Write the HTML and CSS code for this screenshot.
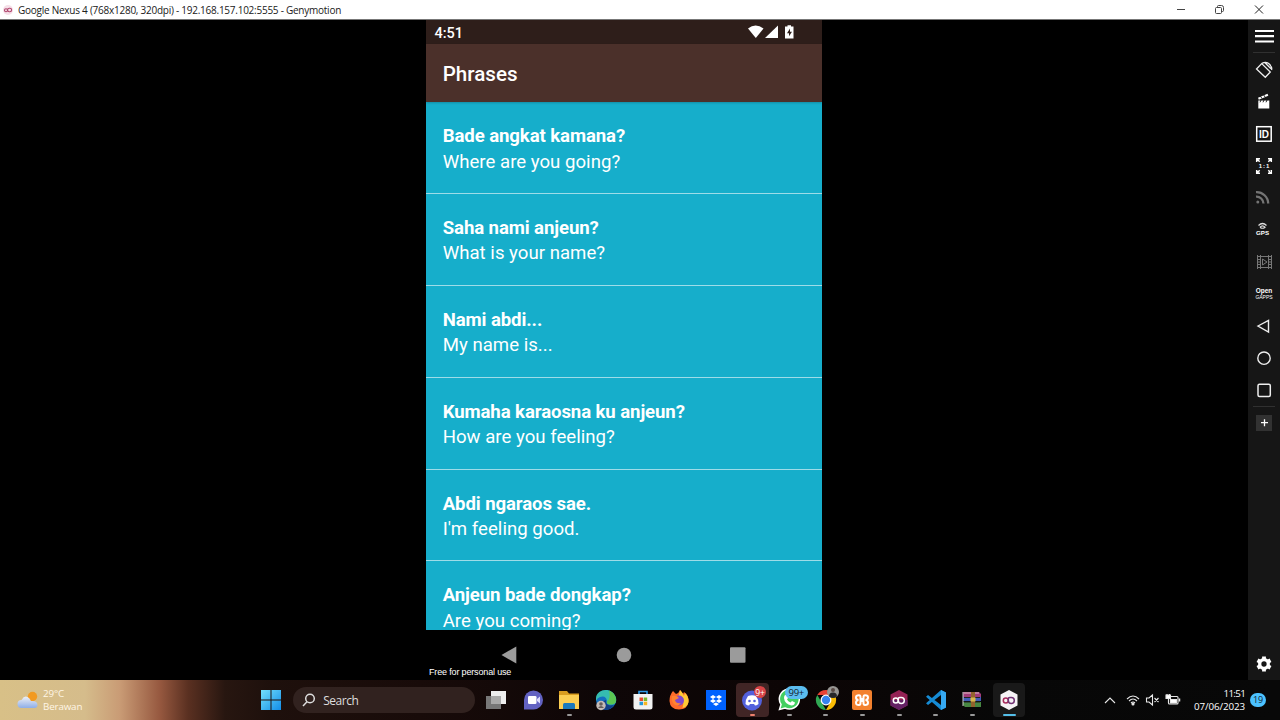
FILE: index.html
```html
<!DOCTYPE html>
<html lang="en">
<head>
<meta charset="utf-8">
<title>Genymotion</title>
<link rel="stylesheet" href="styles.css">
</head>
<body>
<header class="titlebar">
  <svg class="title-logo" width="10" height="10" viewBox="0 0 10 10"><circle cx="5" cy="5" r="5" fill="#f5dfe8"/><g fill="none" stroke="#b0476e" stroke-width="1.1"><circle cx="3" cy="5.2" r="1.5"/><rect x="4.6" y="3.2" width="4" height="3.5" rx="1.7"/></g></svg>
  <span class="title-text">Google Nexus 4 (768x1280, 320dpi) - 192.168.157.102:5555 - Genymotion</span>
  <svg class="window-buttons" width="100" height="19" viewBox="0 0 100 19" fill="none" stroke="#444" stroke-width="1"><path d="M7 9.5h8"/><rect x="45.500" y="7.500" width="6" height="6" rx="1"/><path d="M47.500 7V6.500q0-1 1-1h3q2 0 2 2v3q0 1-1 1h-.5"/><path d="M85 5.500l8 8M93 5.500l-8 8" stroke="#222"/></svg>
</header>

<main class="emulator">
  <section class="stage">
    <div class="phone">
      <div class="statusbar">
        <span>4:51</span>
        <svg width="48" height="16" viewBox="0 0 48 16" fill="#fff"><path d="M0 4.500Q7.500-1.500 15.500 4.500L7.800 14z"/><path d="M30 1.500V14H17z"/><path d="M39.500 1.200h3.500v1.300h2.500v12h-8.500v-12h2.500z"/><path d="M42 4.500l-3 4.700h2v3l3-4.500h-2z" fill="#2e1e1a"/></svg>
      </div>
      <h1 class="appbar">Phrases</h1>
      <ul class="phrases">
        <li class="phrase"><b>Bade angkat kamana?</b><span>Where are you going?</span></li>
        <li class="phrase"><b>Saha nami anjeun?</b><span>What is your name?</span></li>
        <li class="phrase"><b>Nami abdi...</b><span>My name is...</span></li>
        <li class="phrase"><b>Kumaha karaosna ku anjeun?</b><span>How are you feeling?</span></li>
        <li class="phrase"><b>Abdi ngaraos sae.</b><span>I'm feeling good.</span></li>
        <li class="phrase"><b>Anjeun bade dongkap?</b><span>Are you coming?</span></li>
      </ul>
      <div class="navbar">
        <svg width="396" height="34" viewBox="0 0 396 34" fill="#9b9b9b"><path d="M75.500 25L90.300 16.500v17z"/><circle cx="198" cy="25" r="7.300"/><rect x="304" y="17.300" width="15.500" height="15.500" rx="1"/></svg>
        <span class="license">Free for personal use</span>
      </div>
    </div>
  </section>

  <aside class="tools">
    <div class="tool"><svg viewBox="0 0 32 32"><path d="M7 11h19M7 16.200h19M7 21.500h19" stroke="#fff" stroke-width="2.200"/></svg></div>
    <div class="rule"></div>
    <div class="tool"><svg viewBox="0 0 32 32" fill="none" stroke="#eee" stroke-width="1.300"><path d="M8.500 15L13.700 9.600 22.300 18 17.300 23.300z"/><path d="M14 9.300Q18.500 7 21.500 10.300T23.500 16M17 8.700l6 6"/></svg></div>
    <div class="tool"><svg viewBox="0 0 32 32" fill="#fff"><path d="M10.300 14.500h11V22.500h-11z"/><path d="M10 11.700l9.500-4 .8 2-9.500 4z"/><path d="M12.300 10l1.700 2.500M15.500 8.700l1.700 2.500M13 14l-1 2.300M16 14l-1 2.300M19 14l-1 2.300" stroke="#161616" stroke-width=".9"/></svg></div>
    <div class="tool"><svg viewBox="0 0 32 32"><rect x="8.700" y="8.700" width="14.500" height="14.500" fill="none" stroke="#fff" stroke-width="1.500"/><text x="16" y="19.700" class="id-text">ID</text></svg></div>
    <div class="tool"><svg viewBox="0 0 32 32" fill="none" stroke="#fff" stroke-width="1.500"><path d="M8.700 12V8.700H12M8.700 8.700l3 3M20 8.700h3.300V12M23.300 8.700l-3 3M8.700 20v3.300H12M8.700 23.300l3-3M20 23.300h3.300V20M23.300 23.300l-3-3"/><text x="16.500" y="18" class="ratio-text">1:1</text></svg></div>
    <div class="tool"><svg viewBox="0 0 32 32" fill="none" stroke="#747474" stroke-width="2.300"><circle cx="9.800" cy="20" r="1.500" fill="#747474" stroke="none"/><path d="M8 10.200A11.500 11.500 0 0 1 20.200 21.500M8 14.700A7 7 0 0 1 15.500 21.500"/></svg></div>
    <div class="tool"><svg viewBox="0 0 32 32" fill="none" stroke="#ddd" stroke-width="1.200"><path d="M10.500 11.500Q14.500 7.500 18.500 11.500M12 13.200Q14.500 10.500 17 13.200Q14.500 15.300 12 13.200"/><text x="14.600" y="21.200" class="gps-text">GPS</text></svg></div>
    <div class="tool"><svg viewBox="0 0 32 32" fill="none" stroke="#777" stroke-width="1"><path d="M9.500 9v14M12.500 9v14M20.500 9v14M23.500 9v14M9.500 10.500h14M9.500 21.500h14M9.500 13.500h3M9.500 16h3M9.500 18.500h3M20.500 13.500h3M20.500 16h3M20.500 18.500h3"/><path d="M14.500 13v6l4.500-3z"/></svg></div>
    <div class="tool"><svg viewBox="0 0 32 32"><text x="16" y="15" class="open-text">Open</text><text x="16" y="20.500" class="gapps-text">GAPPS</text></svg></div>
    <div class="tool"><svg viewBox="0 0 32 32" fill="none" stroke="#eee" stroke-width="1.400"><path d="M10 16L20.500 10.500v11.500z"/></svg></div>
    <div class="tool"><svg viewBox="0 0 32 32" fill="none" stroke="#eee" stroke-width="1.400"><circle cx="16" cy="16.200" r="6.200"/></svg></div>
    <div class="tool"><svg viewBox="0 0 32 32" fill="none" stroke="#eee" stroke-width="1.500"><rect x="10" y="10.300" width="12.300" height="12.300" rx="1.500"/></svg></div>
    <div class="rule"></div>
    <div class="tool"><svg viewBox="0 0 32 32"><rect x="8" y="7" width="16" height="16" fill="#323232"/><path d="M13 14.700h7M16.500 11.200v7" stroke="#fff" stroke-width="1.300"/></svg></div>
    <div class="tool settings"><svg viewBox="0 0 32 32"><circle cx="16" cy="16" r="4.300" fill="none" stroke="#fff" stroke-width="3.300"/><g stroke="#fff" stroke-width="3.800"><path d="M16 8.500v3M16 20.500v3M9.500 12.250l2.600 1.500M19.900 18.250l2.600 1.500M9.500 19.750l2.600-1.500M19.900 13.750l2.600-1.500"/></g></svg></div>
  </aside>
</main>

<footer class="taskbar">
  <div class="weather">
    <svg width="22" height="20" viewBox="0 0 22 20"><defs><linearGradient id="cloud" x2="0" y2="1"><stop stop-color="#eef0f6"/><stop offset="1" stop-color="#8eaee8"/></linearGradient></defs><circle cx="15.500" cy="6.500" r="4.700" fill="#f29a20"/><path d="M4.500 18a4 4 0 0 1 0-8Q8 4 12.500 8.500q1 1 1.300 2.500Q20.500 10.500 20.500 15q0 3-3 3z" fill="url(#cloud)"/></svg>
    <div><span>29°C</span><span>Berawan</span></div>
  </div>
  <svg class="start" width="20" height="20" viewBox="0 0 20 20"><defs><linearGradient id="win" x2="1" y2="1"><stop stop-color="#74e0fb"/><stop offset="1" stop-color="#128de8"/></linearGradient></defs><path d="M0 0h9.500v9.500H0zM10.500 0H20v9.500h-9.500zM0 10.500h9.500V20H0zM10.500 10.500H20V20h-9.500z" fill="url(#win)"/></svg>
  <div class="search"><svg width="14" height="14" viewBox="0 0 14 14" fill="none" stroke="#ddd" stroke-width="1.500"><circle cx="8" cy="5.500" r="4.300"/><path d="M5 8.700L1 13"/></svg><span>Search</span></div>

  <nav class="apps">
    <div class="app"><svg viewBox="0 0 24 24"><path d="M7 3h15v13H7z" fill="#eee"/><path d="M2 8h15v13H2z" fill="#777"/><path d="M7 8h10v8H7z" fill="#aaa"/></svg></div>
    <div class="app"><svg viewBox="0 0 24 24"><path d="M3 21.500V12a9.500 9.500 0 1 1 9.500 9.500z" fill="#6262c2"/><rect x="7" y="8" width="8.500" height="8" rx="1.300" fill="#fff"/><path d="M16 11l3-2.500v7L16 13z" fill="#dcdcff"/></svg></div>
    <div class="app open"><svg viewBox="0 0 24 24"><path d="M2 3h8l2 2.500h10V21H2z" fill="#d99d20"/><path d="M2 7h20v14H2z" fill="#fbce53"/><path d="M6 16.500q0-1.500 1.500-1.500h9q1.500 0 1.500 1.500V21H6z" fill="#1979bd"/></svg></div>
    <div class="app"><svg viewBox="0 0 24 24"><circle cx="12" cy="12" r="10" fill="#136fc1"/><path d="M2 10C3 0 19-1 22 10q1.500 7-6 6.500-4 0-3-3.500Q12 7 6 9q-3 1-4 4z" fill="#35bcb0"/><path d="M15 2.500q7 3 7 9.500 0 5-6 4.500-4 0-3-3.500 4-2 2-10.500z" fill="#5bc752"/><path d="M12 12q-1 7 8 5-6 8-13 3 0-7 5-8z" fill="#123f86"/><circle cx="7" cy="17.500" r="4.700" fill="#c4bab6"/><circle cx="7" cy="16" r="1.800" fill="#665e5b"/><path d="M4 20q3-4 6 0z" fill="#665e5b"/></svg></div>
    <div class="app"><svg viewBox="0 0 24 24"><path d="M8 7V3.500h8V7" fill="none" stroke="#2d9ae8" stroke-width="1.600"/><path d="M2.500 6h19v13q0 2.500-2.500 2.500H5q-2.500 0-2.500-2.500z" fill="#f2f2f2"/><path d="M8.500 9.500H12V13H8.500z" fill="#e64a2e"/><path d="M12.700 9.500h3.500V13h-3.500z" fill="#74b72b"/><path d="M8.500 13.700H12v3.500H8.500z" fill="#2598d8"/><path d="M12.700 13.700h3.500v3.500h-3.500z" fill="#f7b621"/></svg></div>
    <div class="app"><svg viewBox="0 0 24 24"><path d="M6 3l3 3q3-1 4-4 2 2 3 4l1-2q5 3 4.500 10-1 7.500-9.500 7.500Q3 21.500 2.500 13 2.500 7 6 3z" fill="#ff6b2b"/><path d="M13 2q3 3 4 6l1-3q4 4 3.500 9-1 5-6 6 3-8-4-11 1-4 1.500-7z" fill="#ffca35"/><circle cx="12" cy="12.500" r="5" fill="#8048cb"/><path d="M5 8q5-1 7 2l-4 2q1 4 6 3-4 5-8 0-2-3-1-7z" fill="#ff8330"/></svg></div>
    <div class="app"><svg viewBox="0 0 24 24"><path d="M2 2h20v20H2z" fill="#0062ff"/><path d="M9 7l3 2-3 2-3-2zM15 7l3 2-3 2-3-2zM9 11l3 2-3 2-3-2zM15 11l3 2-3 2-3-2zM12 14.500l3 1.500-3 2-3-2z" fill="#fff"/></svg></div>
    <div class="app open alert"><svg viewBox="0 0 24 24"><circle cx="12" cy="12.500" r="10" fill="#5260dc"/><path d="M8 8q4-1.500 8 0 3 4 2.500 8-2 1.500-3.500 1.500l-1-1.500h-4l-1 1.500q-2 0-3.500-1.500Q5 12 8 8z" fill="#fff"/><circle cx="9.500" cy="13" r="1.300" fill="#5260dc"/><circle cx="14.500" cy="13" r="1.300" fill="#5260dc"/></svg><span class="badge red">9+</span></div>
    <div class="app open"><svg viewBox="0 0 24 24"><path d="M2.500 21.500l1.500-5A10 10 0 1 1 8 20z" fill="#43cf60" stroke="#fff" stroke-width="1.500"/><path d="M8 7l2 0 1 3-1 1.500q1 2 3.500 3l1.500-1.500 3 1.500q-.5 3-3.500 3Q7.500 16 7 10q0-2 1-3z" fill="#fff"/></svg><span class="badge blue">99+</span></div>
    <div class="app open"><svg viewBox="0 0 24 24"><path d="M3.300 7A10 10 0 0 1 20.700 7H12z" fill="#e94235"/><path d="M3.300 7L8 15l4 7A10 10 0 0 1 3.300 7z" fill="#30a853"/><path d="M20.700 7A10 10 0 0 1 12 22l4-7 0-8z" fill="#fbbc04"/><circle cx="12" cy="12" r="4.800" fill="#3683ef" stroke="#fff" stroke-width="1.300"/></svg><svg class="avatar" viewBox="0 0 12 12"><circle cx="6" cy="6" r="6" fill="#989693"/><path d="M2 10.500q0-4 4-4t4 4q-4 3-8 0z" fill="#272729"/><circle cx="6" cy="4" r="2" fill="#594944"/></svg></div>
    <div class="app open"><svg viewBox="0 0 24 24"><rect x="2" y="2" width="20" height="20" rx="2" fill="#f3812e"/><path d="M9 7.200Q6 7.200 6 9.500T8.500 12Q6 12.300 6 14.700T9 17Q10.500 17 10.500 15V13h3v2q0 2 1.500 2 3 0 3-2.300T15.500 12Q18 11.800 18 9.500T15 7.200q-1.500 0-1.500 2V11h-3V9.200q0-2-1.500-2z" fill="none" stroke="#fff" stroke-width="2"/></svg></div>
    <div class="app open"><svg viewBox="0 0 24 24"><path d="M12 2l8.500 4.500v11L12 22l-8.500-4.500v-11z" fill="#952254"/><path d="M3.500 12h17v5.500L12 22l-8.500-4.500z" fill="#642064"/><g fill="none" stroke="#fff" stroke-width="1.500"><circle cx="8.800" cy="12.500" r="2.500"/><path d="M11.300 12.500V11q0-1.500 1.500-1.500h1.500q3 0 3 3t-3 3q-3 0-3-3z"/></g></svg></div>
    <div class="app open"><svg viewBox="0 0 24 24"><path d="M17 2l5 2.500v15L17 22 2 8.700 4 7l13 10V7L4 17l-2-1.700z" fill="#168bd4"/><path d="M17 2l5 2.500v15L17 22z" fill="#36a9f2"/></svg></div>
    <div class="app open"><svg viewBox="0 0 24 24"><path d="M3 4h16l2 2v3H3z" fill="#a13b79"/><path d="M3 9h18v4H3z" fill="#405cb7"/><path d="M3 14h18v5H5l-2-2z" fill="#478641"/><path d="M4 5h15" stroke="#ddc5c5"/><path d="M4 9.500h16M4 14h16" stroke="#222"/><path d="M11 4h4v15h-4z" fill="#93632e"/><path d="M10.500 9.500h5v4h-5z" fill="#d9b74d"/><path d="M3 4v14" stroke="#ccc"/></svg></div>
    <div class="app open active"><svg viewBox="0 0 24 24"><path d="M12 2l8.500 4.500v11L12 22l-8.500-4.500v-11z" fill="#f5f3f5"/><g fill="none" stroke-width="1.500"><circle cx="8.800" cy="12.500" r="2.500" stroke="#a92c5c"/><path d="M11.300 12.500V11q0-1.500 1.500-1.500h1.500q3 0 3 3t-3 3q-3 0-3-3z" stroke="#713374"/></g></svg></div>
  </nav>

  <svg class="tray" width="80" height="16" viewBox="0 0 80 16" fill="none" stroke="#e8e8e8" stroke-width="1.100"><path d="M1 11l5-5 5 5"/><path d="M23 7Q29 1 35 7M25 9Q29 5 33 9M27 11Q29 9 31 11"/><circle cx="29" cy="12" r="1" fill="#fff"/><path d="M42.500 6H45l3.500-3v10L45 10h-2.500zM50.500 6l4 4M54.500 6l-4 4"/><rect x="64.500" y="4.500" width="9.500" height="7.500" rx="1"/><path d="M66.500 7.500h6V11h-6z" fill="#fff"/><path d="M75.500 6.500v3" stroke-width="1.500"/><path d="M62 3h4.500v3.500H62zM63 2v1M65.500 2v1M64.500 7v4" fill="#fff"/></svg>
  <div class="clock"><span>11:51</span><span>07/06/2023</span></div>
  <span class="notice">19</span>
</footer>
</body>
</html>
```

FILE: styles.css
```css
* { box-sizing: border-box; }
body {
  margin: 0;
  width: 1280px;
  height: 720px;
  overflow: hidden;
  display: flex;
  flex-direction: column;
  background: #000;
  font-family: "Open Sans", "Noto Sans", sans-serif;
}
svg { display: block; flex: none; }

.titlebar {
  height: 20px;
  flex: none;
  display: flex;
  align-items: center;
  padding: 0 11px 0 3px;
  background: #fff;
  border-bottom: 1px solid #777;
  color: #202020;
}
.title-text { margin-left: 5px; font-size: 10px; white-space: nowrap; letter-spacing: -0.25px; }
.window-buttons { margin-left: auto; margin-right: -1px; }

.emulator { height: 660px; flex: none; display: flex; }
.stage { flex: 1; padding-left: 426px; }
.phone {
  width: 396px;
  height: 660px;
  display: flex;
  flex-direction: column;
  color: #fff;
  font-family: Roboto, sans-serif;
}
.statusbar {
  height: 24px;
  flex: none;
  display: flex;
  justify-content: space-between;
  align-items: center;
  padding: 0 26px 0 8.500px;
  background: #2e1e1a;
  font-size: 14.5px;
  font-weight: 500;
}
.statusbar span { padding-top: 2px; }
.appbar {
  height: 58px;
  flex: none;
  margin: 0;
  padding: 2px 16.700px 0;
  background: #4b302a;
  font-size: 20.6px;
  font-weight: 500;
  line-height: 57px;
  position: relative;
  box-shadow: 0 1px 2px #0003;
}
.phrases {
  list-style: none;
  margin: 0;
  padding: 0;
  height: 528.400px;
  flex: none;
  overflow: hidden;
  background: #16aecb;
}
.phrase {
  height: 91.900px;
  padding: 22px 16.700px 0;
  border-bottom: 1px solid #9edce8;
  display: flex;
  flex-direction: column;
  font-size: 18.600px;
  line-height: 25.500px;
}
.phrase b { font-weight: 700; letter-spacing: -0.1px; }
.phrase span { letter-spacing: 0.02px; }
.navbar { flex: 1; display: flex; flex-direction: column; }
.license {
  margin: 2px 0 0 3px;
  font: 9px/12px "Liberation Sans", sans-serif;
  letter-spacing: -0.16px;
}

.tools {
  width: 32px;
  background: #161616;
  display: flex;
  flex-direction: column;
}
.tool { height: 32px; }
.tool svg { width: 32px; height: 32px; }
.rule { height: 2px; flex: none; margin: 0 5px; border-top: 1px solid #303030; }
.settings { margin-top: auto; }
.tools text { fill: #fff; stroke: none; text-anchor: middle; font-family: "Liberation Sans", sans-serif; }
.id-text { font-size: 10px; font-weight: bold; }
.ratio-text { font-size: 6px; font-weight: bold; letter-spacing: 1px; }
.gps-text { font-size: 6.200px; font-weight: bold; }
.open-text { font-size: 6.500px; font-weight: bold; }
.gapps-text { font-size: 5px; }

.taskbar {
  height: 40px;
  flex: none;
  display: flex;
  align-items: center;
  background: linear-gradient(90deg, #d8c087 0, #d5bc8b 85px, #c99b75 120px, #96583f 160px, #5a3021 188px, #271610 225px, #1e100c 270px, #180b09 420px, #0e0607 600px, #0c0505 790px, #070707 1000px, #080808 100%);
  color: #fff;
}
.weather {
  width: 261px;
  height: 40px;
  display: flex;
  align-items: center;
  padding-left: 17px;
  gap: 4px;
  font-size: 9.800px;
  line-height: 13.500px;
  letter-spacing: -0.15px;
  color: #fff6e6;
}
.weather span { display: block; }
.start { margin: 0 12px 0 1px; }
.search {
  width: 182px;
  height: 26px;
  margin-right: 2px;
  border-radius: 13px;
  background: #31221f;
  display: flex;
  align-items: center;
  gap: 7px;
  padding-left: 9px;
  font-size: 12px;
  letter-spacing: -0.5px;
  color: #ddd;
}
.search span { letter-spacing: -0.45px; }
.apps { display: flex; margin-left: 1px; }
.app {
  position: relative;
  width: 36.650px;
  height: 40px;
  flex: none;
  display: flex;
  justify-content: center;
  align-items: center;
}
.app > svg { width: 24px; height: 24px; }
.app.open::after {
  content: "";
  position: absolute;
  bottom: 4px;
  left: 16px;
  width: 5px;
  height: 2px;
  border-radius: 1px;
  background: #999;
}
.app.alert::before, .app.active::before {
  content: "";
  position: absolute;
  inset: 3px 2px;
  border-radius: 4px;
  background: #402525;
}
.app.active::before { background: #191919; }
.app.alert > svg, .app.active > svg { position: relative; }
.app.alert::after { background: #ed806d; }
.app.open.active::after { background: #54bee9; width: 13px; left: 12px; }
.badge {
  position: absolute;
  display: flex;
  align-items: center;
  justify-content: center;
}
.badge.red { left: 20px; top: 6px; width: 12px; height: 12px; border-radius: 6px; background: #d94446; font-size: 8.500px; }
.badge.blue { left: 14px; top: 6px; width: 23px; height: 13px; border-radius: 7px; background: #5bbcef; color: #13202d; font-size: 9.500px; letter-spacing: -0.3px; }
.app .avatar { position: absolute; left: 20px; top: 6px; width: 12px; height: 12px; }
.tray { margin-left: 77px; }
.clock {
  width: 61px;
  text-align: right;
  font-size: 9.800px;
  line-height: 13px;
  margin-left: auto;
  letter-spacing: -.1px;
}
.clock span { display: block; white-space: nowrap; }
.clock span:first-child { letter-spacing: -0.7px; }
.notice {
  width: 16px;
  height: 14px;
  margin: 0 14px 0 5px;
  border-radius: 7px;
  background: #4cc2ff;
  color: #142432;
  font-size: 9px;
  line-height: 14px;
  text-align: center;
}
```
